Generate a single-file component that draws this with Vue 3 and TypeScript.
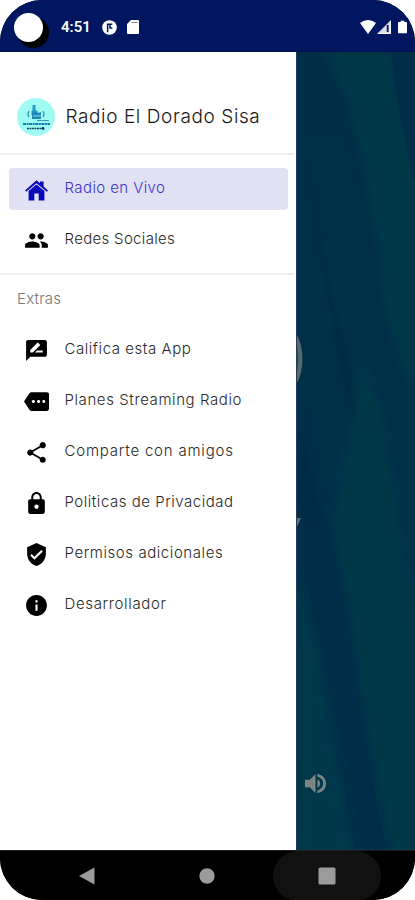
<script setup lang="ts">
interface MenuItem {
  label: string
  icon: string
  spacing: number
  active?: boolean
}

const mainItems: MenuItem[] = [
  { label: 'Radio en Vivo', spacing: 0.4, active: true, icon: 'M12 3 15.400 6V4.200h3.400v5L23 12.900l-1.100 1.300L12 5.900 2.100 14.200 1 12.900ZM12 7.200l7.600 6.300V22.500h-5.500v-6.700H9.900v6.700H4.400v-9Z' },
  { label: 'Redes Sociales', spacing: 0.32, icon: 'M16 11c1.66 0 2.99-1.34 2.99-3S17.66 5 16 5s-3 1.34-3 3 1.34 3 3 3zm-8 0c1.66 0 2.99-1.34 2.99-3S9.66 5 8 5 5 6.34 5 8s1.34 3 3 3zm0 2c-2.33 0-7 1.17-7 3.5V19h14v-2.5c0-2.33-4.67-3.5-7-3.5zm8 0c-.29 0-.62.02-.97.05 1.16.84 1.97 1.97 1.97 3.45V19h6v-2.5c0-2.33-4.67-3.5-7-3.5z' },
]

const extraItems: MenuItem[] = [
  { label: 'Califica esta App', spacing: 0.55, icon: 'M20 2H4c-1.1 0-1.99.9-1.99 2L2 22l4-4h14c1.1 0 2-.9 2-2V4c0-1.1-.9-2-2-2zM6 14v-2.47l6.88-6.88c.2-.2.51-.2.71 0l1.77 1.77c.2.2.2.51 0 .71L8.47 14H6zm12 0h-7.5l2-2H18v2z' },
  { label: 'Planes Streaming Radio', spacing: 0.59, icon: 'M22 3H7c-.69 0-1.23.35-1.59.88L0 12l5.41 8.11c.36.53.97.89 1.66.89H22c1.1 0 2-.9 2-2V5c0-1.1-.9-2-2-2zM9 13.5c-.83 0-1.5-.67-1.5-1.5s.67-1.5 1.5-1.5 1.5.67 1.5 1.5-.67 1.5-1.5 1.5zm5 0c-.83 0-1.5-.67-1.5-1.5s.67-1.5 1.5-1.5 1.5.67 1.5 1.5-.67 1.5-1.5 1.5zm5 0c-.83 0-1.5-.67-1.5-1.5s.67-1.5 1.5-1.5 1.5.67 1.5 1.5-.67 1.5-1.5 1.5z' },
  { label: 'Comparte con amigos', spacing: 0.8, icon: 'M18 16.08c-.76 0-1.44.3-1.96.77L8.91 12.7c.05-.23.09-.46.09-.7s-.04-.47-.09-.7l7.05-4.11c.54.5 1.25.81 2.04.81 1.66 0 3-1.34 3-3s-1.34-3-3-3-3 1.34-3 3c0 .24.04.47.09.7L8.04 9.81C7.5 9.31 6.79 9 6 9c-1.66 0-3 1.34-3 3s1.34 3 3 3c.79 0 1.5-.31 2.04-.81l7.12 4.16c-.05.21-.08.43-.08.65 0 1.61 1.31 2.92 2.92 2.92s2.92-1.31 2.92-2.92-1.31-2.92-2.92-2.92z' },
  { label: 'Politicas de Privacidad', spacing: 0.53, icon: 'M18 8h-1V6c0-2.76-2.24-5-5-5S7 3.24 7 6v2H6c-1.1 0-2 .9-2 2v10c0 1.1.9 2 2 2h12c1.1 0 2-.9 2-2V10c0-1.1-.9-2-2-2zm-6 9c-1.1 0-2-.9-2-2s.9-2 2-2 2 .9 2 2-.9 2-2 2zm3.1-9H8.9V6c0-1.71 1.39-3.1 3.1-3.1s3.1 1.39 3.1 3.1v2z' },
  { label: 'Permisos adicionales', spacing: 0.57, icon: 'M12 1 3 5v6c0 5.55 3.84 10.74 9 12 5.16-1.26 9-6.45 9-12V5l-9-4zm-2 16-4-4 1.41-1.41L10 14.17l6.59-6.59L18 9l-8 8z' },
  { label: 'Desarrollador', spacing: 0.65, icon: 'M12 2C6.48 2 2 6.48 2 12s4.48 10 10 10 10-4.48 10-10S17.52 2 12 2zm1 15h-2v-6h2v6zm0-8h-2V7h2v2z' },
]
</script>

<template>
  <div class="phone">
    <header class="status">
      <span class="camera"></span>
      <span class="clock">4:51</span>
      <svg class="app-dot" viewBox="0 0 16 16"><circle cx="8" cy="8" r="7.8" fill="#fff" /><path d="M6 13V4.500H11M8.500 4.500v4h2.500" fill="none" stroke="#001660" stroke-width="1.600" /></svg>
      <svg class="sd" viewBox="0 0 12 14"><path d="M4 0h7q1 0 1 1v12q0 1-1 1H1q-1 0-1-1V4Z" fill="#fff" /><path d="M4.500 2.500h6" stroke="#7c85aa" /></svg>
      <span class="grow"></span>
      <svg class="wifi" viewBox="0 0 16 14"><path d="M0 3Q8-3 16 3L8 14Z" fill="#fff" /></svg>
      <svg class="signal" viewBox="0 0 14 14"><path d="M14 0v14H0Z" fill="#d8dce9" /><path d="M10.700 5v7" stroke="#001660" stroke-width="1.800" fill="none" /><path d="M13.300 1v12.300H1" stroke="#fff" fill="none" /></svg>
      <svg class="battery" viewBox="0 0 10 14"><path d="M3 0h4v1.500h2q1 0 1 1V13q0 1-1 1H1q-1 0-1-1V2.500q0-1 1-1h2Z" fill="#fff" /></svg>
    </header>

    <main class="content">
      <aside class="drawer">
        <div class="brand">
          <svg class="logo" viewBox="0 0 38 38">
            <circle cx="19" cy="19" r="19" fill="#9ffbf3" />
            <path d="M15.500 7h3v5l2 1v4h-6v-4l1-1Z" fill="#299bc4" />
            <path d="m15 15 3-2 3 2 3-1v7h-9Z" fill="#1d89b7" />
            <path d="M12 13q-2 3 0 6M26 13q2 3 0 6" fill="none" stroke="#338fac" stroke-width="1.200" />
            <path d="M16 18h8" stroke="#7edce6" stroke-width="1" />
            <path d="M20 22.500h12" stroke="#267ca8" stroke-width=".8" />
            <path d="M6 26h27" stroke="#167fae" stroke-width="2" stroke-dasharray="3 .6 2 .5" />
            <path d="M10 30.500h15" stroke="#174d66" stroke-width="1.500" stroke-dasharray="2 .5" />
            <circle cx="26" cy="30.500" r="1.400" fill="#172f78" />
          </svg>
          <h1>Radio El Dorado Sisa</h1>
        </div>
        <nav class="group main-group">
          <a v-for="item in mainItems" :key="item.label" class="item" :class="{ active: item.active }">
            <svg class="icon" viewBox="0 0 24 24"><path :d="item.icon" fill="currentColor" /></svg>
            <span class="label" :style="{ letterSpacing: item.spacing + 'px' }">{{ item.label }}</span>
          </a>
        </nav>
        <h2>Extras</h2>
        <nav class="group">
          <a v-for="item in extraItems" :key="item.label" class="item">
            <svg class="icon" viewBox="0 0 24 24"><path :d="item.icon" fill="currentColor" /></svg>
            <span class="label" :style="{ letterSpacing: item.spacing + 'px' }">{{ item.label }}</span>
          </a>
        </nav>
      </aside>
      <section class="backdrop">
        <svg class="scene" viewBox="0 0 119 798" preserveAspectRatio="none">
          <defs>
            <filter id="soft" x="-30%" y="-10%" width="160%" height="120%"><feGaussianBlur stdDeviation="5" /></filter>
            <filter id="faint" x="-30%" y="-10%" width="160%" height="120%"><feGaussianBlur stdDeviation="1.500" /></filter>
            <linearGradient id="base" x1="0" y1="0" x2="0" y2="1">
              <stop offset="0" stop-color="#003047" /><stop offset=".55" stop-color="#003149" /><stop offset="1" stop-color="#00374b" />
            </linearGradient>
          </defs>
          <rect width="119" height="798" fill="url(#base)" />
          <g filter="url(#soft)">
            <path d="M25-10H94Q100 70 125 130V345Q100 310 88 240 75 130 53 50Z" fill="#003746" />
            <path d="M64 310Q88 350 96 440L125 610V820H94L58 590 38 480Z" fill="#003747" />
            <path d="M0 430 25 450 46 525 66 660 98 815H60Q40 690 20 590L0 510Z" fill="#002d48" />
            <path d="M0 510 20 590 58 815H0Z" fill="#003749" />
            <path d="M0 350 12 400 26 470 10 480 0 440Z" fill="#002947" />
          </g>
          <path d="M95 0h24v130Q103 70 95 0Z" fill="#002d47" />
          <path d="M10 105Q21 180 37 250 55 300 60 378 41 320 28 230Z" fill="#002b45" opacity=".65" filter="url(#faint)" />
          <ellipse cx="-13" cy="307" rx="18.500" ry="34" fill="#5c6867" />
          <ellipse cx="-13" cy="307" rx="14.500" ry="30" fill="#086052" />
          <path d="M0 466h4L0 475Z" fill="#5d7077" />
        </svg>
        <svg class="volume" viewBox="0 0 24 24">
          <path d="M1 8h5l6-6v20l-6-6H1ZM14 7.500q3 1.500 3 4.500t-3 4.500ZM14 1.800Q23 4 23 12t-9 10.200v-3q6-2 6-7.200t-6-7.200Z" fill="#7c8586" />
        </svg>
      </section>
    </main>

    <footer class="navbar">
      <span class="slot"><svg class="nav-icon" viewBox="0 0 18 18"><path d="M1 9 16.500.5v17Z" fill="#9b9b9b" /></svg></span>
      <span class="slot"><svg class="nav-icon" viewBox="0 0 18 18"><circle cx="9" cy="9" r="7.700" fill="#9b9b9b" /></svg></span>
      <span class="slot pressed"><svg class="nav-icon" viewBox="0 0 18 18"><rect x=".5" y=".5" width="17" height="17" rx="1.500" fill="#9b9b9b" /></svg></span>
    </footer>
  </div>
</template>

<style>
body { background: #fff; }
</style>

<style scoped>
* { box-sizing: border-box; }
.phone {
  display: flex;
  flex-direction: column;
  width: 415px;
  height: 900px;
  overflow: hidden;
  border-radius: 42px;
  font-family: Inter, "Open Sans", sans-serif;
  font-weight: 300;
  background: #000;
}
.status {
  display: flex;
  align-items: center;
  flex: 0 0 52px;
  padding: 3px 8px 0 14px;
  background: #001660;
  border-bottom: 1px solid #00104f;
}
.camera { width: 29px; height: 29px; border-radius: 50%; background: #fff; box-shadow: 5px 5px 1px 1px #000; }
.clock { width: 41px; margin-left: 18px; font: 600 15px Roboto, sans-serif; color: #fff; }
.app-dot { width: 15px; height: 15px; }
.sd { width: 12px; height: 14px; margin-left: 10px; }
.grow { flex: 1; }
.wifi { width: 16px; height: 14px; }
.signal { width: 14px; height: 14px; margin-left: 1px; }
.battery { width: 9px; height: 14px; margin-left: 7px; }
.content { display: flex; flex: 0 0 798px; }
.drawer { width: 296px; background: #fff; }
.brand {
  display: flex;
  align-items: center;
  gap: 10.500px;
  width: 294px;
  height: 103px;
  padding: 29px 0 0 17px;
  border-bottom: 2px solid #f0f0f0;
}
.logo { width: 38px; height: 38px; }
h1 { margin: 0 0 2px; font-size: 19px; font-weight: 300; letter-spacing: .6px; color: #171717; white-space: nowrap; }
.group { display: flex; flex-direction: column; gap: 9px; padding: 0 8px 0 9px; }
.main-group { width: 294px; height: 120px; padding: 13px 6px 0 9px; border-bottom: 2px solid #f0f0f0; }
.item {
  display: flex;
  align-items: center;
  gap: 15.500px;
  height: 42px;
  flex: none;
  padding-left: 15px;
  border-radius: 4px;
  color: #000;
}
.icon { flex: none; width: 25px; height: 25px; }
.label { margin-bottom: 2px; font-size: 15px; line-height: 20px; color: #292929; white-space: nowrap; }
.active { background: #e0e1f3; color: #0808b8; }
.active .label { color: #3b35c5; }
h2 { height: 54px; margin: 0; padding: 14px 0 0 17px; font-size: 15px; line-height: 20px; font-weight: 300; letter-spacing: .2px; color: #777; }
.backdrop { position: relative; width: 119px; border-left: 1px solid #253c58; }
.scene { display: block; width: 118px; height: 798px; }
.volume { position: absolute; left: 7px; top: 720px; width: 23px; height: 23px; }
.navbar { display: flex; justify-content: center; gap: 12px; flex: 0 0 50px; padding-right: 1px; background: #000; border-top: 1px solid #202020; }
.slot { display: flex; align-items: center; justify-content: center; width: 108px; height: 50px; border-radius: 25px; }
.pressed { background: #111; }
.nav-icon { width: 18px; height: 18px; }
</style>
